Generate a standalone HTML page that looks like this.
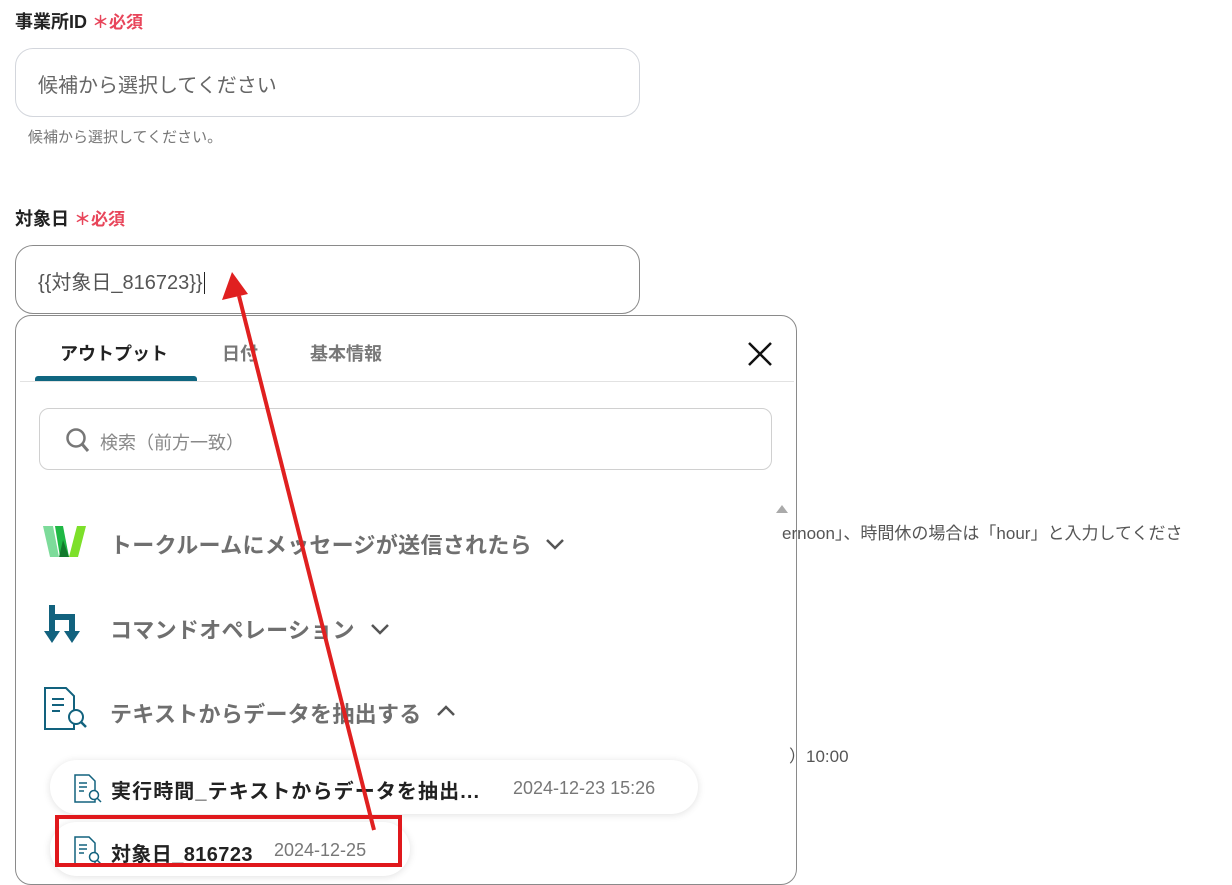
<!DOCTYPE html>
<html><head><meta charset="utf-8"><style>
*{margin:0;padding:0;box-sizing:border-box}
body{width:1232px;height:867px;overflow:hidden;background:#fff;font-family:"Liberation Sans","Noto Sans CJK JP",sans-serif;position:relative;color:#333}
.a{position:absolute;white-space:nowrap}
.lbl{font-size:18px;font-weight:bold;color:#222}
.req{color:#e8455a;font-size:17px;font-weight:bold}
.inp{position:absolute;left:15px;width:625px;height:69px;border:1px solid #d3d6dc;border-radius:18px;font-size:20px;color:#666;padding:20px 0 0 22px}
.g{color:#6f6f6f;font-weight:bold;font-size:22px;letter-spacing:0.3px}
</style></head><body>
<div class="a lbl" style="left:15px;top:8px">事業所ID <span class="req">＊必須</span></div>
<div class="inp" style="top:48px">候補から選択してください</div>
<div class="a" style="left:28px;top:126px;font-size:15px;color:#777">候補から選択してください。</div>
<div class="a lbl" style="left:15px;top:205px">対象日 <span class="req">＊必須</span></div>
<div class="inp" style="top:245px;border-color:#8a8a8a;color:#555">{{対象日_816723}}<span style="border-left:1px solid #222;margin-left:1px"></span></div>

<div class="a" style="left:15px;top:315px;width:782px;height:570px;border:1px solid #8a8a8a;border-radius:16px;background:#fff"></div>
<div class="a" style="left:782px;top:519px;font-size:17px;color:#555;z-index:2">ernoon」、時間休の場合は「hour」と入力してくださ</div>
<div class="a" style="left:789px;top:742px;font-size:17px;color:#555;z-index:2">）10:00</div>
<div class="a" style="left:60px;top:340px;font-size:18px;font-weight:bold;color:#222">アウトプット</div>
<div class="a" style="left:222px;top:340px;font-size:18px;font-weight:bold;color:#777">日付</div>
<div class="a" style="left:310px;top:340px;font-size:18px;font-weight:bold;color:#777">基本情報</div>
<div class="a" style="left:35px;top:376px;width:162px;height:6px;background:#0f6680;border-radius:3px 3px 0 0"></div>
<div class="a" style="left:20px;top:381px;width:774px;height:1px;background:#e2e2e2"></div>
<svg class="a" style="left:747px;top:341px" width="26" height="26"><path d="M2 2L24 24M24 2L2 24" stroke="#111" stroke-width="2.5"/></svg>
<div class="a" style="left:39px;top:408px;width:733px;height:62px;border:1px solid #d0d0d0;border-radius:10px"></div>
<svg class="a" style="left:65px;top:427px" width="28" height="28"><circle cx="11" cy="11" r="8.5" fill="none" stroke="#777" stroke-width="2.5"/><path d="M17 17L23 24" stroke="#777" stroke-width="3"/></svg>
<div class="a" style="left:100px;top:429px;font-size:18px;color:#888">検索（前方一致）</div>
<svg class="a" style="left:776px;top:504px" width="12" height="10"><path d="M0 9L6 1L12 9Z" fill="#aaa"/></svg>

<svg class="a" style="left:43px;top:526px" width="44" height="32"><path d="M0 0H10L16 31H7Z" fill="#7ddb9a"/><path d="M12 0H20L26 31H17Z" fill="#1fb845"/><path d="M26 31L34 0H43L35 31Z" fill="#7de02a"/><path d="M16 31L20 14L26 31Z" fill="#127a2c"/></svg>
<div class="a g" style="left:110px;top:528px">トークルームにメッセージが送信されたら</div>
<svg class="a" style="left:545px;top:537px" width="20" height="14"><path d="M2 3L10 11L18 3" fill="none" stroke="#555" stroke-width="2.5"/></svg>
<svg class="a" style="left:44px;top:603px" width="42" height="42"><path d="M8 2V30M8 14H28V30" fill="none" stroke="#12627e" stroke-width="6"/><path d="M0 28H16L8 40Z M20 28H36L28 40Z" fill="#12627e"/></svg>
<div class="a g" style="left:110px;top:613px">コマンドオペレーション</div>
<svg class="a" style="left:370px;top:622px" width="20" height="14"><path d="M2 3L10 11L18 3" fill="none" stroke="#555" stroke-width="2.5"/></svg>
<svg class="a" style="left:44px;top:687px" width="44" height="44"><path d="M1 1H22L30 9V42H1Z" fill="none" stroke="#12627e" stroke-width="2"/><path d="M8 12H20M8 18H20M8 24H16" stroke="#12627e" stroke-width="2"/><circle cx="32" cy="30" r="7" fill="#fff" stroke="#12627e" stroke-width="2"/><path d="M37 35L42 40" stroke="#12627e" stroke-width="2.5"/></svg>
<div class="a g" style="left:110px;top:697px">テキストからデータを抽出する</div>
<svg class="a" style="left:436px;top:704px" width="20" height="14"><path d="M2 11L10 3L18 11" fill="none" stroke="#555" stroke-width="2.5"/></svg>

<div class="a" style="left:50px;top:760px;width:648px;height:54px;border-radius:27px;background:#fff;box-shadow:0 1px 8px rgba(0,0,0,.12)"></div>
<svg class="a" style="left:74px;top:774px" width="28" height="30"><path d="M1 1H15L21 7V28H1Z" fill="none" stroke="#12627e" stroke-width="1.5"/><path d="M5 9H13M5 13H13M5 17H10" stroke="#12627e" stroke-width="1.5"/><circle cx="20" cy="21" r="4.5" fill="#fff" stroke="#12627e" stroke-width="1.5"/><path d="M23 24L27 28" stroke="#12627e" stroke-width="1.5"/></svg>
<div class="a" style="left:111px;top:775px;font-size:20px;font-weight:bold;color:#222;letter-spacing:1.1px">実行時間_テキストからデータを抽出...</div>
<div class="a" style="left:513px;top:778px;font-size:18px;color:#777">2024-12-23 15:26</div>
<div class="a" style="left:50px;top:822px;width:360px;height:54px;border-radius:27px;background:#fff;box-shadow:0 1px 8px rgba(0,0,0,.12)"></div>
<svg class="a" style="left:74px;top:836px" width="28" height="30"><path d="M1 1H15L21 7V28H1Z" fill="none" stroke="#12627e" stroke-width="1.5"/><path d="M5 9H13M5 13H13M5 17H10" stroke="#12627e" stroke-width="1.5"/><circle cx="20" cy="21" r="4.5" fill="#fff" stroke="#12627e" stroke-width="1.5"/><path d="M23 24L27 28" stroke="#12627e" stroke-width="1.5"/></svg>
<div class="a" style="left:111px;top:838px;font-size:20px;font-weight:bold;color:#222;letter-spacing:0.4px">対象日_816723</div>
<div class="a" style="left:274px;top:840px;font-size:18px;color:#777">2024-12-25</div>
<div class="a" style="left:55px;top:815px;width:347px;height:52px;border:4px solid #e0181c"></div>

<svg class="a" style="left:0;top:0" width="1232" height="867"><path d="M374 830L239 296" stroke="#e02020" stroke-width="4"/><path d="M232 272L222 300L248 294Z" fill="#e02020"/></svg>
</body></html>
